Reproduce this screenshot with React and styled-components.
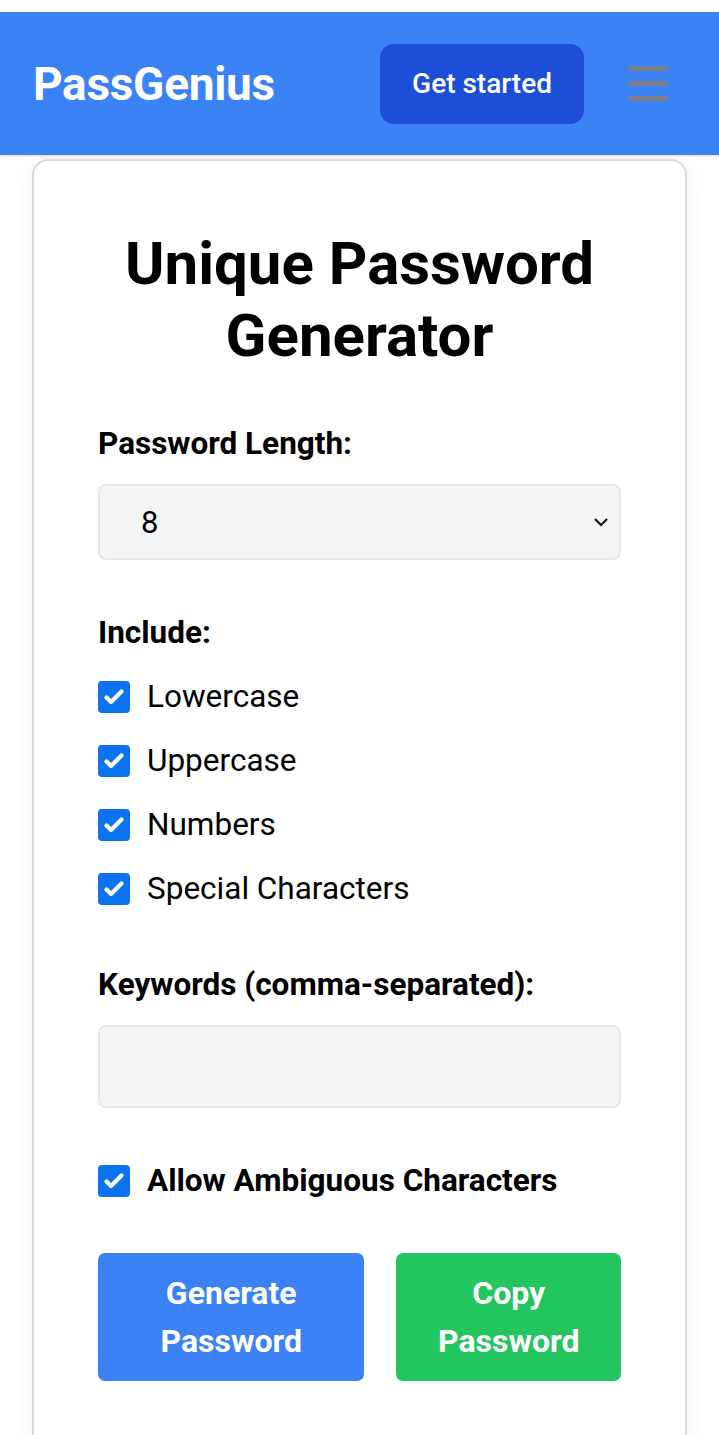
import React, { useState } from "react"
import styled, { createGlobalStyle } from "styled-components"

const GlobalStyle = createGlobalStyle`
  body {
    margin: 0;
    background: #ffffff;
    font-family: Roboto, "Liberation Sans", sans-serif;
    color: #000000;
  }
`

const Page = styled.div`
  padding-top: 12px;
  min-height: 1423px;
  overflow: hidden;
`

const Header = styled.header`
  height: 143px;
  display: flex;
  align-items: center;
  justify-content: space-between;
  padding: 0 51px 0 33px;
  background: #3b82f6;
  box-shadow: 0 2px 2px rgba(0, 0, 0, 0.08);
`

const Logo = styled.div`
  font-size: 46px;
  font-weight: 700;
  color: #ffffff;
  letter-spacing: -0.3px;
`

const NavRight = styled.div`
  display: flex;
  align-items: center;
  gap: 44px;
`

const StartButton = styled.button`
  width: 204px;
  height: 80px;
  border: none;
  border-radius: 14px;
  background: #1d4ed8;
  color: #ffffff;
  font-family: Roboto, "Liberation Sans", sans-serif;
  font-size: 28px;
  font-weight: 500;
`

const Burger = styled.div`
  width: 40px;
  display: flex;
  flex-direction: column;
  gap: 10px;
  span {
    display: block;
    height: 5px;
    border-radius: 2px;
    background: #7b7f88;
    filter: blur(0.5px);
  }
`

const Card = styled.main`
  margin: 4px 32px 0 32px;
  padding: 67px 64px 120px;
  border: 2px solid #d9d9de;
  border-radius: 16px;
  box-shadow: 0 4px 18px rgba(0, 0, 0, 0.07);
  background: #ffffff;
`

const Title = styled.h1`
  margin: 0 0 52px;
  text-align: center;
  font-size: 60px;
  line-height: 72px;
  font-weight: 700;
`

const Label = styled.div`
  font-size: 31.5px;
  font-weight: 700;
  line-height: 40px;
  margin-bottom: ${p => p.$gap || 20}px;
`

const SelectBox = styled.div`
  height: 76px;
  box-sizing: border-box;
  display: flex;
  align-items: center;
  justify-content: space-between;
  padding: 0 10px 0 41px;
  background: #f3f4f6;
  border: 2px solid #e5e7eb;
  border-radius: 8px;
  font-size: 31px;
  margin-bottom: 53px;
`

const TextBox = styled.div`
  height: 83px;
  box-sizing: border-box;
  background: #f3f4f6;
  border: 2px solid #e5e7eb;
  border-radius: 8px;
  margin-bottom: 53px;
`

const CheckList = styled.div`
  display: flex;
  flex-direction: column;
  gap: 24px;
  margin-bottom: 56px;
`

const CheckRow = styled.label`
  display: flex;
  align-items: center;
  gap: 17px;
  font-size: 31.5px;
  line-height: 40px;
  font-weight: ${p => (p.$bold ? 700 : 400)};
`

const Box = styled.span`
  width: 32px;
  height: 32px;
  flex: none;
  border-radius: 4px;
  background: #0b72f0;
  display: flex;
  align-items: center;
  justify-content: center;
`

const Buttons = styled.div`
  display: flex;
  gap: 32px;
  margin-top: 52px;
`

const ActionButton = styled.button`
  width: ${p => p.$width}px;
  height: 128px;
  border: none;
  border-radius: 7px;
  background: ${p => p.$bg};
  color: #ffffff;
  font-family: Roboto, "Liberation Sans", sans-serif;
  font-size: 32px;
  line-height: 48px;
  font-weight: 700;
  padding: 0 20px;
`

const Check = ({ children, bold }) => (
  <CheckRow $bold={bold}>
    <Box>
      <svg width="24" height="24" viewBox="0 0 24 24">
        <path d="M4.5 12.5l4.5 4.5L19.5 6.5" fill="none" stroke="#fff" strokeWidth="4.2" strokeLinecap="round" strokeLinejoin="round" />
      </svg>
    </Box>
    {children}
  </CheckRow>
)

export default function App() {
  const [length] = useState(8)
  return (
    <Page>
      <GlobalStyle />
      <Header>
        <Logo>PassGenius</Logo>
        <NavRight>
          <StartButton>Get started</StartButton>
          <Burger>
            <span />
            <span />
            <span />
          </Burger>
        </NavRight>
      </Header>
      <Card>
        <Title>
          Unique Password
          <br />
          Generator
        </Title>
        <Label>Password Length:</Label>
        <SelectBox>
          <span>{length}</span>
          <svg width="16" height="10" viewBox="0 0 16 10">
            <path d="M2 2l6 6 6-6" fill="none" stroke="#111" strokeWidth="2.2" />
          </svg>
        </SelectBox>
        <Label $gap={24}>Include:</Label>
        <CheckList>
          <Check>Lowercase</Check>
          <Check>Uppercase</Check>
          <Check>Numbers</Check>
          <Check>Special Characters</Check>
        </CheckList>
        <Label>Keywords (comma-separated):</Label>
        <TextBox />
        <Check bold>Allow Ambiguous Characters</Check>
        <Buttons>
          <ActionButton $bg="#3b82f6" $width={267}>
            Generate Password
          </ActionButton>
          <ActionButton $bg="#22c55e" $width={225}>
            Copy Password
          </ActionButton>
        </Buttons>
      </Card>
    </Page>
  )
}
